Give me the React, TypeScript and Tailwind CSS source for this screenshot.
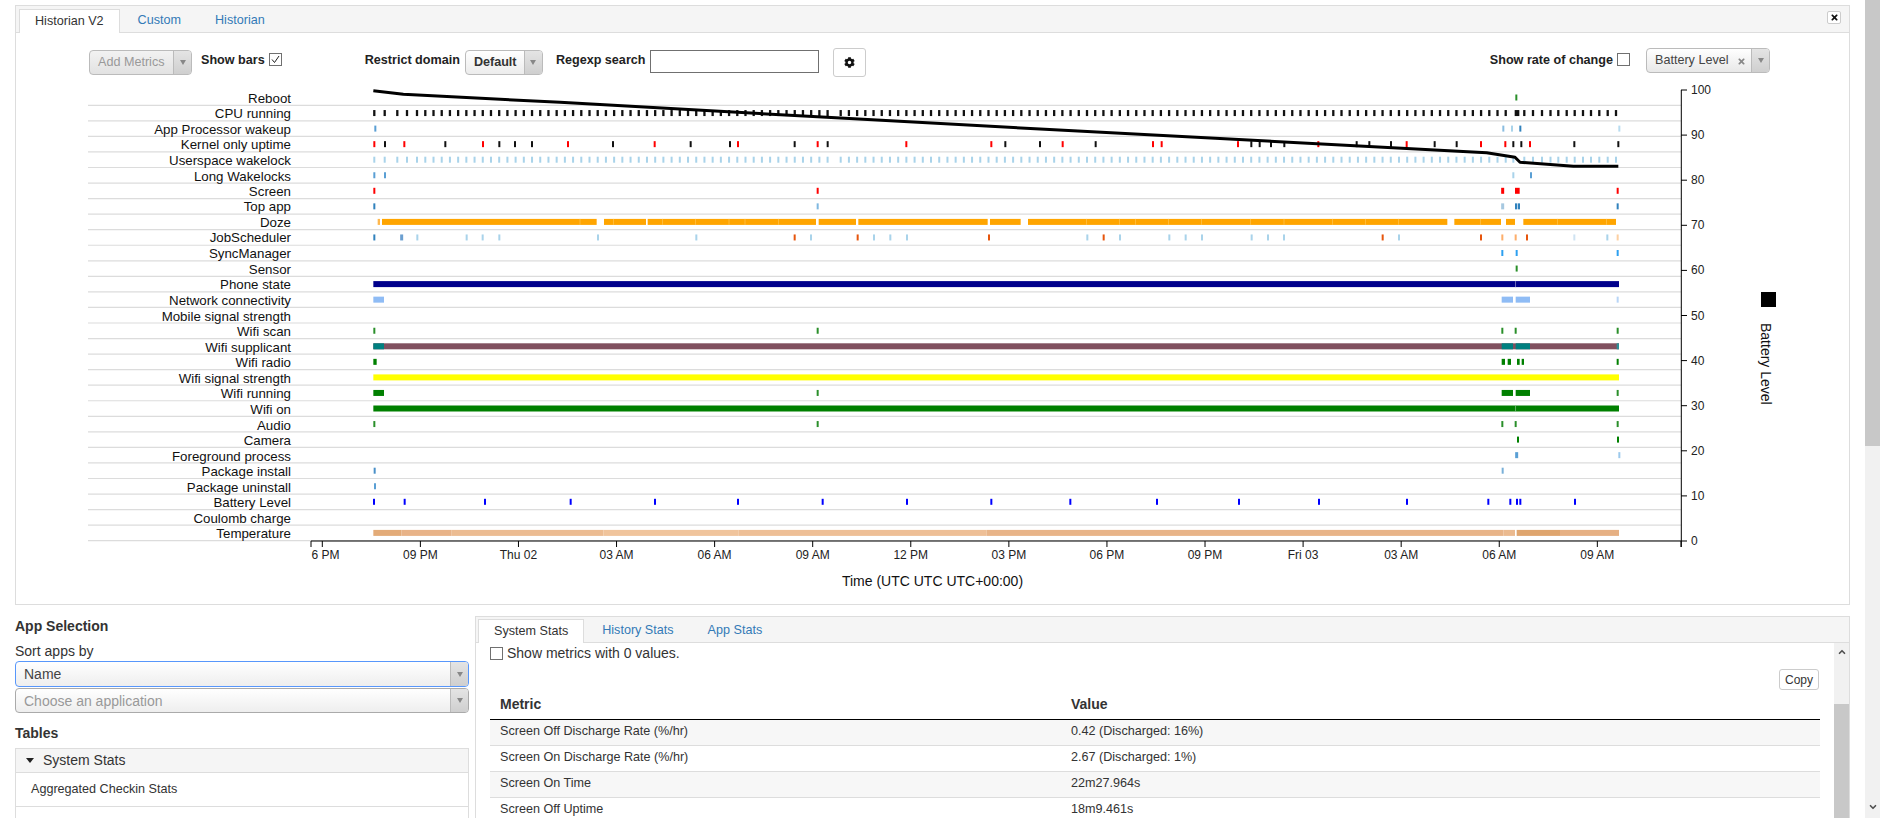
import { ChevronDown, ChevronUp } from "lucide-react";
import { FaCog, FaTimes } from "react-icons/fa";

// the crops were read at 3x, so marks are written in crop units from four origins
const a = (v: number) => 60 + v / 3;
const b = (v: number) => 560 + v / 3;
const c = (v: number) => 1040 + v / 3;
const d = (v: number) => 1440 + v / 3;

type Mark = { x: number; w: number; fill: string };
type Row = { label: string; marks: Mark[] };

const tick = (fill: string, xs: number[], w = 2): Mark[] =>
  xs.map((x) => ({ x: x - w / 2, w, fill }));
const span = (fill: string, from: number, to: number): Mark => ({ x: from, w: to - from, fill });

const steps = (from: number, to: number, step: number) => {
  const out: number[] = [];
  for (let x = from; x <= to + 0.5; x += step) out.push(x);
  return out;
};

const cpuTicks = [
  374.3, 384.7, 397.3, 407, 417,
  ...steps(425.3, 827.7, 8.21),
  ...steps(840.7, 1505.7, 8.21),
  1524.3, 1533, 1542, 1550.5, 1558.3, 1566.7, 1574.7, 1583, 1591, 1599.3, 1607.7, 1616,
];

const RED = "#ff0000";
const BLACK = "#111111";
const LIGHT = "#a9d3ea";
const MID = "#5a9fd4";
const BLUE = "#3182bd";
const ORANGE = "#ffa500";
const BURNT = "#e6550d";
const PEACH = "#fdae6b";
const GREEN = "#2a8f2a";
const DARKGREEN = "#008000";
const TEAL = "#008080";
const WIFI = "#80505f";
const TAN = "#e8b488";

const left = a(940);
const right = d(537);

const dozeGaps = [
  ...[60, 160, 308, 407, 507, 555, 655].map(b),
  ...[140, 238, 287, 385, 485, 632, 732, 878, 976, 1076].map(c),
  d(121), d(352), d(500),
];

const rows: Row[] = [
  { label: "Reboot", marks: tick(GREEN, [c(1429)]) },
  {
    label: "CPU running",
    marks: [...tick(BLACK, cpuTicks, 2.3), span(BLACK, c(1424), c(1438))],
  },
  {
    label: "App Processor wakeup",
    marks: [
      ...tick(MID, [a(946)]),
      ...tick("#8abde0", [c(1390)]),
      ...tick(LIGHT, [c(1416)]),
      ...tick(BLUE, [c(1441)]),
      ...tick("#b8dcf0", [d(538)]),
    ],
  },
  {
    label: "Kernel only uptime",
    marks: [
      ...tick(RED, [a(943), a(1033), a(1269), b(24), b(284), b(534), b(773), b(1039), b(1294), c(68), c(339), c(365), c(594), c(835), c(1100), c(1323), c(1396), c(1470)]),
      ...tick(BLACK, [a(975), a(1156), a(1318), a(1365), a(1416), b(159), b(392), b(510), b(704), b(803), b(1336), b(1440), c(167), c(634), c(659), c(693), c(733), c(950), c(988), c(1053), c(1184), c(1250), c(1420), c(1444), d(403), d(535)]),
    ],
  },
  {
    label: "Userspace wakelock",
    marks: [...tick(LIGHT, cpuTicks), ...tick(LIGHT, [c(1420)])],
  },
  {
    label: "Long Wakelocks",
    marks: [...tick(MID, [a(943), a(975), c(1473)]), ...tick(LIGHT, [c(1420)])],
  },
  {
    label: "Screen",
    marks: [
      ...tick(RED, [a(943), b(773), d(533)]),
      ...tick(RED, [c(1388)], 3),
      span(RED, c(1425), c(1439)),
    ],
  },
  {
    label: "Top app",
    marks: [
      ...tick(BLUE, [a(943), d(533)]),
      ...tick("#7fb8e0", [b(773)]),
      ...tick("#a6c8e0", [c(1388)], 3),
      span(BLUE, c(1425), c(1431)),
      span(BLUE, c(1433), c(1440)),
    ],
  },
  {
    label: "Doze",
    marks: [
      span("#ffb84d", a(953), a(960)),
      span(ORANGE, a(966), b(110)),
      span(ORANGE, b(132), b(258)),
      span(ORANGE, b(263), b(768)),
      span(ORANGE, b(776), b(888)),
      span(ORANGE, b(895), b(1283)),
      span(ORANGE, b(1290), b(1382)),
      span(ORANGE, b(1404), c(1222)),
      span(ORANGE, c(1243), c(1383)),
      span(ORANGE, c(1398), c(1425)),
      span(ORANGE, d(250), d(528)),
      ...tick("#ffc552", dozeGaps, 0.7),
    ],
  },
  {
    label: "JobScheduler",
    marks: [
      ...tick(BLUE, [a(943)]),
      ...tick("#6b9fd0", [a(1025)], 3),
      ...tick(LIGHT, [a(1072), a(1220), a(1268), a(1318), b(114), b(409), b(753), b(942), b(991), b(1041), c(142), c(240), c(388), c(437), c(486), c(635), c(684), c(732), c(1077), d(502)]),
      ...tick(BURNT, [b(704), b(893), b(1287), c(191), c(1028), c(1323), c(1461)]),
      ...tick(PEACH, [c(1387), c(1427)]),
      ...tick("#cfe3f2", [d(403)]),
      ...tick("#fdd0a2", [d(533)]),
    ],
  },
  { label: "SyncManager", marks: tick("#2da0f0", [d(187), d(230), d(533)]) },
  { label: "Sensor", marks: tick(GREEN, [d(230)]) },
  {
    label: "Phone state",
    marks: [span("#00008b", left, right), ...tick("#9a9ad0", [d(227)], 0.7)],
  },
  {
    label: "Network connectivity",
    marks: [
      span("#8fbcf5", left, a(972)),
      span("#8fbcf5", d(185), d(219)),
      span("#8fbcf5", d(227), d(270)),
      ...tick("#b8d5f7", [d(533)]),
    ],
  },
  { label: "Mobile signal strength", marks: [] },
  { label: "Wifi scan", marks: tick(GREEN, [a(943), b(773), c(1387), c(1427), d(533)]) },
  {
    label: "Wifi supplicant",
    marks: [
      span(WIFI, left, right),
      span(TEAL, left, a(972)),
      span(TEAL, d(185), d(219)),
      span(TEAL, d(227), d(270)),
      span("#2f8f96", d(530), d(537)),
    ],
  },
  {
    label: "Wifi radio",
    marks: [
      span(DARKGREEN, left, a(950)),
      span(DARKGREEN, d(185), d(195)),
      span(DARKGREEN, d(203), d(213)),
      span(DARKGREEN, d(231), d(239)),
      span(DARKGREEN, d(245), d(252)),
      ...tick(DARKGREEN, [d(533)]),
    ],
  },
  { label: "Wifi signal strength", marks: [span("#ffff00", left, right)] },
  {
    label: "Wifi running",
    marks: [
      span(DARKGREEN, left, a(972)),
      span(DARKGREEN, d(185), d(219)),
      span(DARKGREEN, d(227), d(270)),
      ...tick(GREEN, [b(773), d(533)]),
    ],
  },
  {
    label: "Wifi on",
    marks: [span(DARKGREEN, left, right), ...tick("#8cc48c", [d(227)], 0.7)],
  },
  { label: "Audio", marks: tick(GREEN, [a(943), b(773), d(187), d(227), d(533)]) },
  { label: "Camera", marks: tick(DARKGREEN, [d(234), d(534)]) },
  {
    label: "Foreground process",
    marks: [...tick(MID, [d(230)], 3), ...tick("#9cc9ec", [d(538)])],
  },
  {
    label: "Package install",
    marks: [...tick("#4a90c8", [a(944)]), ...tick("#7ab0d8", [d(188)])],
  },
  { label: "Package uninstall", marks: tick(MID, [a(945)]) },
  {
    label: "Battery Level",
    marks: tick("#0000ff", [a(942), a(1034), a(1275), b(32), b(285), b(534), b(788), b(1041), b(1294), c(91), c(351), c(597), c(837), c(1101), c(1345), c(1411), c(1431), c(1441), d(405)]),
  },
  { label: "Coulomb charge", marks: [] },
  {
    label: "Temperature",
    marks: [
      span("#e3ab78", left, a(1024)),
      span("#e8b388", a(1024), a(1175)),
      span("#ecbc92", a(1175), b(130)),
      span("#f0c49c", b(130), b(535)),
      span("#eebf96", b(535), b(1280)),
      span(TAN, b(1280), c(1390)),
      span("#ebba8f", c(1390), c(1425)),
      span("#dfa56e", c(1430), d(360)),
      span("#e6b083", d(360), right),
    ],
  },
];

const batteryLine: [number, number][] = [
  [a(940), 90.7],
  [a(1030), 94.3],
  [b(0), 102.3],
  [b(800), 117.3],
  [c(0), 129],
  [c(1340), 152.7],
  [c(1425), 157.3],
  [c(1440), 162.3],
  [d(240), 162.3],
  [d(400), 166.3],
  [d(535), 166.3],
];

const xTicks = ["6 PM", "09 PM", "Thu 02", "03 AM", "06 AM", "09 AM", "12 PM", "03 PM", "06 PM", "09 PM", "Fri 03", "03 AM", "06 AM", "09 AM"];
const yTicks = [100, 90, 80, 70, 60, 50, 40, 30, 20, 10, 0];

const lineY = (i: number) => 105.3 + 15.55 * i;
const rowY = (i: number) => 97.5 + 15.55 * i;
const labelY = (i: number) => rowY(i) + (i < 13 && i !== 5 ? 5 : 5.5);

function Timeline() {
  return (
    <svg width={1833} height={524} viewBox="16 80 1833 524" className="block">
      {rows.map((row, i) => (
        <line key={row.label} x1={88} x2={1681} y1={lineY(i)} y2={lineY(i)} stroke="#dcdcdc" strokeWidth={1.2} />
      ))}
      {rows.map((row, i) => (
        <g key={row.label}>
          <text x={291} y={labelY(i)} textAnchor="end" fontSize={13.3} fill="#111">
            {row.label}
          </text>
          {row.marks.map((m, j) => (
            <rect key={j} x={m.x} y={rowY(i) - 3} width={m.w} height={6} fill={m.fill} />
          ))}
        </g>
      ))}

      <polyline points={batteryLine.map((p) => p.join(",")).join(" ")} fill="none" stroke="#000" strokeWidth={3} strokeLinejoin="round" />

      <path d="M311 547V541H1681V547" fill="none" stroke="#000" strokeWidth={1} />
      {xTicks.map((t, i) => {
        const x = 322.3 + i * 98.08;
        return (
          <g key={i}>
            <line x1={x} x2={x} y1={541} y2={547} stroke="#000" />
            <text x={i === 0 ? 311.5 : x} y={558.5} textAnchor={i === 0 ? "start" : "middle"} fontSize={12} fill="#222">
              {t}
            </text>
          </g>
        );
      })}
      <text x={932.5} y={586} textAnchor="middle" fontSize={14} fill="#111">
        Time (UTC UTC UTC+00:00)
      </text>

      <line x1={1681.3} x2={1681.3} y1={90} y2={547} stroke="#000" />
      {yTicks.map((t, i) => {
        const y = 90 + i * 45.1;
        return (
          <g key={t}>
            <line x1={1681} x2={1687} y1={y} y2={y} stroke="#000" />
            <text x={1691} y={y + 4} fontSize={12} fill="#222">
              {t}
            </text>
          </g>
        );
      })}

      <rect x={1761} y={292} width={15} height={15} fill="#000" />
      <text transform="translate(1761 323) rotate(90)" fontSize={14} fill="#111">
        Battery Level
      </text>
    </svg>
  );
}

function Arrow() {
  return (
    <span className="flex w-[18px] shrink-0 items-center justify-center self-stretch rounded-r-[3px] border-l border-[#bbb] bg-gradient-to-b from-[#e4e4e4] to-[#cfcfcf]">
      <span className="h-0 w-0 border-x-[3px] border-t-[5px] border-x-transparent border-t-[#888]" />
    </span>
  );
}

function Check({ checked = false, className = "" }: { checked?: boolean; className?: string }) {
  return (
    <span className={`flex h-[13px] w-[13px] shrink-0 items-center justify-center border border-[#707070] bg-white ${className}`}>
      {checked && (
        <svg viewBox="0 0 11 11" className="h-[11px] w-[11px]" fill="none" stroke="#222" strokeWidth={1}>
          <path d="M2 5.5 L4.5 8.5 L9 2" />
        </svg>
      )}
    </span>
  );
}

const topTabs = ["Historian V2", "Custom", "Historian"];
const statTabs = ["System Stats", "History Stats", "App Stats"];
const stats = [
  ["Screen Off Discharge Rate (%/hr)", "0.42 (Discharged: 16%)"],
  ["Screen On Discharge Rate (%/hr)", "2.67 (Discharged: 1%)"],
  ["Screen On Time", "22m27.964s"],
  ["Screen Off Uptime", "18m9.461s"],
];

export default function App() {
  return (
    <div className="flex h-[818px] w-[1880px] overflow-hidden bg-white font-['Liberation_Sans',Arial,sans-serif] text-[#222]">
      <div className="flex w-[1865px] shrink-0 flex-col px-[15px] pt-[5px]">
        {/* historian panel */}
        <div className="h-[600px] shrink-0 border border-[#ddd]">
          <div className="flex h-[27px] items-end justify-between border-b border-[#ddd] bg-[#f5f5f5] pl-[3px] pr-[8px]">
            <div className="flex gap-[2px]">
              {topTabs.map((t, i) => (
                <span
                  key={t}
                  className={
                    i === 0
                      ? "-mb-px flex h-[24px] items-center border-x border-t border-[#ddd] bg-white px-[15px] pb-px text-[12.6px] text-[#333]"
                      : "flex h-[23px] items-center px-[16px] pb-px text-[12.6px] text-[#337ab7]"
                  }
                >
                  {t}
                </span>
              ))}
            </div>
            <span className="mb-[8px] flex h-[13px] w-[14px] items-center justify-center rounded-[2px] border border-[#ccc] bg-white">
              <FaTimes size={9} color="#111" />
            </span>
          </div>

          <div className="mt-[14px] flex h-[30px] items-center text-[12.6px]">
            <div className="ml-[73px] flex h-[25px] w-[103px] items-center rounded-[4px] border border-[#bbb] bg-gradient-to-b from-[#f2f2f2] to-[#e2e2e2] pl-[8px] text-[#999]">
              <span className="flex-1">Add Metrics</span>
              <Arrow />
            </div>
            <span className="ml-[9px] mb-[3px] font-bold">Show bars</span>
            <Check checked className="mb-[5px] ml-[4px]" />
            <span className="ml-[83px] mb-[3px] font-bold">Restrict domain</span>
            <div className="ml-[5px] flex h-[25px] w-[78px] items-center rounded-[4px] border border-[#bbb] bg-gradient-to-b from-white to-[#ececec] pl-[8px]">
              <span className="flex-1 font-bold text-[#333]">Default</span>
              <Arrow />
            </div>
            <span className="ml-[13px] mb-[3px] font-bold">Regexp search</span>
            <input className="mb-[2px] ml-[5px] h-[23px] w-[169px] border border-[#707070] bg-white" />
            <button className="ml-[14px] flex h-[29px] w-[33px] items-center justify-center rounded-[3px] border border-[#ccc] bg-white">
              <FaCog size={11} color="#111" />
            </button>
            <span className="ml-auto mb-[4px] font-bold">Show rate of change</span>
            <Check className="mb-[6px] ml-[4px]" />
            <div className="mb-[4px] ml-[16px] mr-[79px] flex h-[25px] w-[124px] items-center rounded-[4px] border border-[#bbb] bg-gradient-to-b from-white to-[#e8e8e8] pl-[8px] text-[#444]">
              <span>Battery Level</span>
              <FaTimes size={9} color="#888" className="ml-[8px] mt-[3px]" />
              <span className="flex-1" />
              <Arrow />
            </div>
          </div>

          <div className="mt-[3px]">
            <Timeline />
          </div>
        </div>

        <div className="mt-[11px] flex min-h-0 flex-1">
          {/* app selection */}
          <div className="w-[454px] shrink-0">
            <div className="flex h-[20px] items-center text-[14px] font-bold text-[#333]">App Selection</div>
            <div className="mt-[6px] flex h-[19px] items-center text-[14px] text-[#333]">Sort apps by</div>
            <div className="flex h-[26px] items-center rounded-[4px] border border-[#5897fb] bg-gradient-to-b from-white to-[#eee] pl-[8px] text-[14px] leading-[18px] text-[#444]">
              <span className="flex-1">Name</span>
              <Arrow />
            </div>
            <div className="mt-px flex h-[25px] items-center rounded-[4px] border border-[#aaa] bg-gradient-to-b from-white to-[#eee] pl-[8px] text-[14px] leading-[18px] text-[#999]">
              <span className="flex-1">Choose an application</span>
              <Arrow />
            </div>
            <div className="mt-[10px] flex h-[20px] items-center text-[14px] font-bold text-[#333]">Tables</div>
            <div className="mt-[5px] border border-[#ddd] text-[#333]">
              <div className="flex h-[24px] items-center border-b border-[#ddd] bg-[#f5f5f5] pl-[10px] text-[14px]">
                <span className="h-0 w-0 border-x-[4px] border-t-[5px] border-x-transparent border-t-[#222]" />
                <span className="ml-[9px]">System Stats</span>
              </div>
              <div className="flex h-[34px] items-center border-b border-[#ddd] pb-px pl-[15px] text-[12.6px]">Aggregated Checkin Stats</div>
              <div className="flex h-[34px] items-center pl-[15px] text-[12.6px]">Device&apos;s Power Estimates</div>
            </div>
          </div>

          {/* stats panel */}
          <div className="ml-[6px] flex min-w-0 flex-1 flex-col border-x border-t border-[#ddd]">
            <div className="flex h-[26px] shrink-0 items-end gap-[2px] border-b border-[#ddd] bg-[#f5f5f5] pl-[2px]">
              {statTabs.map((t, i) => (
                <span
                  key={t}
                  className={
                    i === 0
                      ? "-mb-px flex h-[24px] items-center border-x border-t border-[#ddd] bg-white px-[15px] text-[12.6px] text-[#333]"
                      : "flex h-[23px] items-center px-[16px] text-[12.6px] text-[#337ab7]"
                  }
                >
                  {t}
                </span>
              ))}
            </div>
            <div className="flex min-h-0 flex-1">
              <div className="min-w-0 flex-1">
                <div className="flex h-[20px] items-center pl-[14px] text-[14px] text-[#333]">
                  <Check />
                  <span className="ml-[4px]">Show metrics with 0 values.</span>
                </div>
                <div className="mt-[6px] flex justify-end pr-[15px]">
                  <button className="flex h-[21px] w-[40px] items-center justify-center rounded-[3px] border border-[#ccc] bg-white text-[12px] text-[#333]">
                    Copy
                  </button>
                </div>
                <div className="pl-[14px] pr-[14px]">
                  <table className="w-full table-fixed text-left text-[12.6px] text-[#333]">
                    <thead>
                      <tr className="h-[29px] border-b border-black text-[14px]">
                        <th className="w-[581px] pl-[10px] font-bold">Metric</th>
                        <th className="font-bold">Value</th>
                      </tr>
                    </thead>
                    <tbody>
                      {stats.map(([metric, value], i) => (
                        <tr key={metric} className={`h-[26px] border-b border-[#ddd] ${i % 2 === 0 ? "bg-[#f7f7f7]" : "bg-white"}`}>
                          <td className="pb-px pl-[10px]">{metric}</td>
                          <td className="pb-px">{value}</td>
                        </tr>
                      ))}
                    </tbody>
                  </table>
                </div>
              </div>
              <div className="flex w-[15px] shrink-0 flex-col bg-[#f1f1f1]">
                <div className="flex h-[61px] justify-center pt-[4px]">
                  <ChevronUp size={10} strokeWidth={4} color="#505050" />
                </div>
                <div className="flex-1 bg-[#c8c8c8]" />
              </div>
            </div>
          </div>
        </div>
      </div>

      {/* page scrollbar */}
      <div className="flex w-[15px] shrink-0 flex-col bg-[#f1f1f1]">
        <div className="h-[446px] bg-[#c8c8c8]" />
        <div className="mt-auto flex h-[16px] justify-center">
          <ChevronDown size={10} strokeWidth={4} color="#505050" />
        </div>
      </div>
    </div>
  );
}
